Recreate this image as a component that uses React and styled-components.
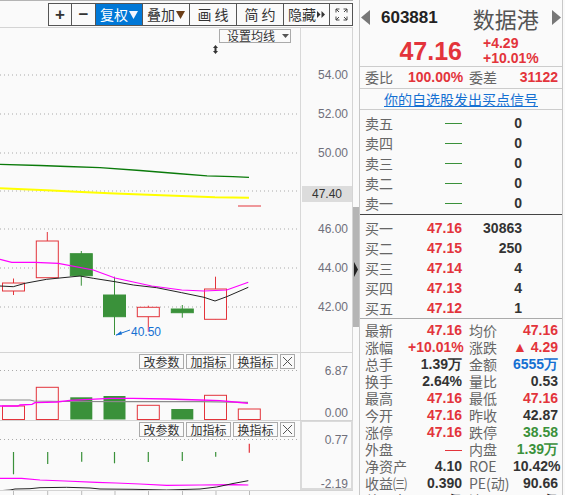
import React from 'react';
import styled, { createGlobalStyle } from 'styled-components';

const RED = '#e3343b';
const GREEN = '#3a913a';
const BLUE = '#1570d2';
const NUM = '"Liberation Sans", Arial, sans-serif';
const CJK = '"Noto Sans CJK SC", "Liberation Sans", sans-serif';

const GlobalStyle = createGlobalStyle`
  html, body { margin: 0; padding: 0; background: #fafafa; }
  body { font-family: ${CJK}; overflow: hidden; }
`;

// ---------- data ----------
const tools = [
  { w: 22, label: '+', sym: true },
  { w: 24, label: '−', sym: true },
  { w: 47, label: '复权', arrow: 'white', active: true },
  { w: 47, label: '叠加', arrow: 'brown' },
  { w: 47, label: '画 线' },
  { w: 47, label: '简 约' },
  { w: 46, label: '隐藏', more: true },
  { w: 23, full: true },
];

const candles = [
  { x: 13.5, t: 283, b: 291, h: 278.5, l: 295, up: true },
  { x: 47.3, t: 241, b: 277.7, h: 232, l: 277.7, up: true },
  { x: 81.3, t: 253.7, b: 275.7, h: 251, l: 285.7 },
  { x: 114.5, t: 295, b: 316.7, h: 276.7, l: 335 },
  { x: 148.3, t: 307.3, b: 316.7, h: 305.7, l: 331.7, up: true },
  { x: 182.3, t: 309, b: 312.7, h: 305, l: 317.7 },
  { x: 215.5, t: 289, b: 319.3, h: 276.7, l: 289, up: true },
];

const vols = [
  { x: 13.5, t: 406, up: true },
  { x: 47.3, t: 387.3, up: true },
  { x: 81.3, t: 397.3 },
  { x: 114.5, t: 396 },
  { x: 148.3, t: 405.3, up: true },
  { x: 182.3, t: 409 },
  { x: 215.5, t: 395.3, up: true },
  { x: 249.3, t: 409, up: true },
];

const macd = [
  { x: 13.5, y: 474.3 },
  { x: 47.7, y: 464 },
  { x: 81.7, y: 461.7 },
  { x: 114.5, y: 463.3 },
  { x: 148.3, y: 462 },
  { x: 182.3, y: 461 },
  { x: 215.7, y: 456.7 },
  { x: 249.3, y: 443.7, up: true },
];

const sells = ['卖五', '卖四', '卖三', '卖二', '卖一'];
const buys = [
  ['买一', '47.16', '30863'],
  ['买二', '47.15', '250'],
  ['买三', '47.14', '4'],
  ['买四', '47.13', '4'],
  ['买五', '47.12', '1'],
];

const stats = [
  ['最新', '47.16', RED, '均价', '47.16', RED],
  ['涨幅', '+10.01%', RED, '涨跌', '▲ 4.29', RED],
  ['总手', '1.39万', '#333', '金额', '6555万', BLUE],
  ['换手', '2.64%', '#333', '量比', '0.53', '#333'],
  ['最高', '47.16', RED, '最低', '47.16', RED],
  ['今开', '47.16', RED, '昨收', '42.87', '#333'],
  ['涨停', '47.16', RED, '跌停', '38.58', GREEN],
  ['外盘', null, RED, '内盘', '1.39万', GREEN],
  ['净资产', '4.10', '#333', 'ROE', '10.42%', '#333'],
  ['收益㈢', '0.390', '#333', 'PE(动)', '90.66', '#333'],
  ['总股本', '0.53亿', '#333', '流通股', '0.53亿', '#333'],
];

// ---------- layout ----------
const Page = styled.div`
  display: flex;
  width: 565px;
  height: 495px;
  overflow: hidden;
  background: #fafafa;
`;

const Left = styled.div`
  width: 353px;
  flex-shrink: 0;
  display: flex;
  flex-direction: column;
  border-top: 1px solid #b4b4b4;
  & > * { flex-shrink: 0; }
`;

const Toolbar = styled.div`
  height: 27px;
  box-sizing: border-box;
  border-bottom: 1px solid #d4d4d4;
  display: flex;
  justify-content: flex-end;
  align-items: flex-start;
  padding-top: 2px;
`;

const ToolGroup = styled.div`
  display: flex;
  height: 23px;
  box-sizing: border-box;
  border: 1px solid #555;
`;

const ToolButton = styled.div`
  width: ${p => p.$w}px;
  flex-shrink: 0;
  box-sizing: border-box;
  border-left: 1px solid #555;
  &:first-child { border-left: none; }
  display: flex;
  align-items: center;
  justify-content: center;
  gap: 1px;
  background: ${p => (p.$active ? '#0078d7' : 'transparent')};
  color: ${p => (p.$active ? '#fff' : '#333')};
  font-family: ${p => (p.$sym ? NUM : CJK)};
  font-weight: ${p => (p.$sym ? 700 : 400)};
  font-size: ${p => (p.$sym ? 17 : 14)}px;
  line-height: 21px;
  white-space: pre;
  svg { display: block; flex-shrink: 0; }
`;

const Panel = styled.div`
  display: flex;
  height: ${p => p.$h}px;
  border-top: ${p => (p.$top ? '1px solid #d4d4d4' : 'none')};
`;

const Plot = styled.div`
  position: relative;
  width: 300px;
  flex-shrink: 0;
  svg { display: block; }
`;

const Axis = styled.div`
  position: relative;
  width: ${p => (p.$boxed ? 49 : 51)}px;
  border: ${p => (p.$boxed ? '2px solid #dadada' : 'none')};
  border-left: ${p => (p.$boxed ? '2px solid #dadada' : '1px solid #d8d8d8')};
  border-right: ${p => (p.$boxed ? '2px solid #dadada' : '1px solid #d4d4d4')};
  border-top-width: ${p => (p.$boxed ? 1 : 0)}px;
`;

const AxisLabel = styled.div`
  position: absolute;
  right: ${p => (p.$boxed ? 3 : 4)}px;
  font-family: ${NUM};
  font-size: 12px;
  line-height: 14px;
  color: #6f6f7a;
`;

const AxisMark = styled.div`
  position: absolute;
  left: 1px;
  right: 0;
  height: 16px;
  background: #dcdcdc;
  color: #333;
  font-family: ${NUM};
  font-size: 12px;
  line-height: 16px;
  text-align: center;
`;

const MaButton = styled.div`
  position: absolute;
  left: 219px;
  top: 1px;
  width: 72px;
  height: 14px;
  box-sizing: border-box;
  border: 1px solid #aaa;
  display: flex;
  align-items: center;
  padding-left: 7px;
  gap: 7px;
  font-size: 12px;
  line-height: 12px;
  color: #333;
`;

const DragMark = styled.div`
  position: absolute;
  left: 213px;
  top: 17px;
  svg { display: block; }
`;

const PanelButtons = styled.div`
  position: absolute;
  top: 1px;
  right: 5px;
  display: flex;
  gap: 2px;
`;

const PanelButton = styled.div`
  width: ${p => p.$w}px;
  height: 15px;
  box-sizing: border-box;
  border: 1px solid #aaa;
  font-size: 12px;
  line-height: 13px;
  text-align: center;
  color: #333;
  svg { display: block; }
`;

const TimeAxis = styled.div`
  flex: 1;
  border-top: 1px solid #d4d4d4;
  svg { display: block; }
`;

const Scroll = styled.div`
  position: relative;
  width: 6px;
  flex-shrink: 0;
`;

const Thumb = styled.div`
  position: absolute;
  left: 0;
  right: 0;
  top: 207px;
  height: 120px;
  background: #b5b5b5;
`;

const ScrollMarker = styled.div`
  position: absolute;
  left: 1px;
  top: 262px;
  svg { display: block; }
`;

const Right = styled.div`
  width: 202px;
  flex-shrink: 0;
  border-left: 1px solid #c8c8c8;
  border-right: 1px solid #c8c8c8;
  display: flex;
  flex-direction: column;
  & > * { flex-shrink: 0; }
`;

const Header = styled.div`
  height: 34px;
  display: flex;
  align-items: center;
  padding: 1px 1px 0;
  box-sizing: border-box;
  svg { display: block; }
`;

const Code = styled.div`
  margin-left: 11px;
  font-family: ${NUM};
  font-weight: 700;
  font-size: 17px;
  line-height: 20px;
  color: #222;
`;

const Name = styled.div`
  margin-left: 35px;
  font-size: 22px;
  line-height: 26px;
  color: #555;
`;

const Spacer = styled.div`
  flex: 1;
`;

const PriceBlock = styled.div`
  height: 32px;
  display: flex;
  align-items: center;
  border-bottom: 1px solid #ccc;
`;

const BigPrice = styled.div`
  width: 102px;
  text-align: right;
  font-family: ${NUM};
  font-weight: 700;
  font-size: 25px;
  line-height: 26px;
  color: ${RED};
  padding-top: 2px;
`;

const Changes = styled.div`
  margin-left: 21px;
  font-family: ${NUM};
  font-weight: 700;
  font-size: 14px;
  line-height: 15px;
  color: ${RED};
  padding-top: 1px;
`;

const Grid = styled.div`
  display: grid;
  grid-template-columns: ${p => p.$cols};
  grid-auto-rows: ${p => p.$row}px;
  align-items: center;
  padding-left: 5px;
  padding-top: ${p => p.$pt || 0}px;
  padding-bottom: ${p => p.$pb || 0}px;
  border-bottom: ${p => p.$line || 'none'};
`;

const Label = styled.div`
  font-size: 14px;
  line-height: 17px;
  color: #666;
  white-space: nowrap;
  padding-left: ${p => (p.$indent ? 7 : 0)}px;
`;

const Value = styled.div`
  font-family: ${NUM};
  font-weight: 700;
  font-size: 14px;
  line-height: 17px;
  text-align: right;
  white-space: nowrap;
  color: ${p => p.$color || '#333'};
`;

const Dash = styled.span`
  display: inline-block;
  vertical-align: middle;
  width: 17px;
  height: 1px;
  background: ${p => p.$color};
`;

const LinkRow = styled.div`
  height: 20px;
  border-bottom: 1px solid #ccc;
  display: flex;
  align-items: center;
  justify-content: center;
`;

const SignalLink = styled.a`
  font-size: 14px;
  line-height: 17px;
  color: ${BLUE};
  text-decoration: underline;
`;

// ---------- drawings ----------
const Tri = ({ color }) => (
  <svg width="9" height="9" viewBox="0 0 9 9">
    <polygon points="0,1 9,1 4.5,9" fill={color} />
  </svg>
);

const Arrows = () => (
  <svg width="8" height="7" viewBox="0 0 8 7">
    <polygon points="0,0 3.5,3.5 0,7" fill="#333" />
    <polygon points="4.5,0 8,3.5 4.5,7" fill="#333" />
  </svg>
);

const FullIcon = () => (
  <svg width="13" height="13" viewBox="0 0 13 13" fill="none" stroke="#444" strokeWidth="1">
    <path d="M1 4.5V1h3.5M1 1l3 3" />
    <path d="M12 4.5V1H8.5M12 1L9 4" />
    <path d="M1 8.5V12h3.5M1 12l3-3" />
    <path d="M12 8.5V12H8.5M12 12L9 9" />
  </svg>
);

const SideArrow = ({ right }) => (
  <svg width="9" height="15" viewBox="0 0 9 15">
    <polygon points={right ? '0,0 9,7.5 0,15' : '9,0 0,7.5 9,15'} fill="#777" />
  </svg>
);

const GridLines = ({ ys }) =>
  ys.map(y => (
    <line key={y} x1="0" x2="300" y1={y} y2={y} stroke="#aaa" strokeDasharray="1 3" />
  ));

const MainChart = () => (
  <svg width="300" height="324" viewBox="0 28 300 324">
    <GridLines ys={[75, 114, 153, 191, 229, 268, 307]} />
    <polyline
      points="0,164.3 40,165.5 67,166.5 100,167.7 140,170.5 177,173.5 207,175.8 233,176.7 249,177.3"
      fill="none" stroke="#0a7a0a" strokeWidth="1.3"
    />
    <polyline
      points="0,188.3 46.7,190.3 81.7,192 115,193.6 148.3,194.8 181.7,196 215,197.3 249,197.7"
      fill="none" stroke="#ffff00" strokeWidth="2"
    />
    <line x1="238" x2="261" y1="206" y2="206" stroke={RED} strokeWidth="1" />
    {candles.map((c, i) => (
      <g key={i}>
        {c.up ? (
          <>
            <line x1={c.x} x2={c.x} y1={c.h} y2={c.t} stroke={RED} />
            <line x1={c.x} x2={c.x} y1={c.b} y2={c.l} stroke={RED} />
            <rect x={c.x - 11} y={c.t} width="22" height={c.b - c.t} fill="#fafafa" stroke={RED} />
          </>
        ) : (
          <>
            <line x1={c.x} x2={c.x} y1={c.h} y2={c.l} stroke={GREEN} />
            <rect x={c.x - 11} y={c.t} width="22" height={c.b - c.t} fill={GREEN} stroke={GREEN} />
          </>
        )}
      </g>
    ))}
    <polyline
      points="0,259.3 11.7,262.3 35,262.3 58.3,263.3 93.3,270 115,278 151.7,286 181.7,290 204,291 226.7,290 248.3,282.3"
      fill="none" stroke="#ff00ff" strokeWidth="1.2"
    />
    <polyline
      points="0,286 13.3,286.7 25,283.3 46.7,279.3 80,276 93.3,278.3 115,281.7 133.3,285 156.7,287.7 181.7,292.7 204,297.3 215,301 226.7,296.7 248.3,287.3"
      fill="none" stroke="#222" strokeWidth="1"
    />
    <line x1="116" y1="335" x2="130" y2="330" stroke={BLUE} />
    <polygon points="115.5,335.5 121,331 122,334.5" fill={BLUE} />
    <text x="131" y="335.5" fontFamily={NUM} fontSize="12" fill={BLUE}>40.50</text>
  </svg>
);

const VolChart = () => (
  <svg width="300" height="67" viewBox="0 353 300 67">
    <GridLines ys={[370.5]} />
    {vols.map((v, i) =>
      v.up ? (
        <rect key={i} x={v.x - 11} y={v.t} width="22" height={419.5 - v.t} fill="none" stroke={RED} />
      ) : (
        <rect key={i} x={v.x - 11} y={v.t} width="22" height={419.5 - v.t} fill={GREEN} />
      )
    )}
    <polyline
      points="0,400 30,400 34,401 66,401.5 130,401.7 200,401.7 248,402.3"
      fill="none" stroke="#8a8a8a" strokeWidth="1.2"
    />
    <polyline
      points="0,406 18,406 20,405 32,404.3 35,402.7 57,402 70,400.3 90,399.3 110,398.3 133,398.3 167,399 200,400 220,400.7 240,402.5 248,403.3"
      fill="none" stroke="#ff00ff" strokeWidth="1.3"
    />
  </svg>
);

const MacdChart = () => (
  <svg width="300" height="69" viewBox="0 421 300 69">
    <GridLines ys={[439.5]} />
    {macd.map((m, i) => (
      <line
        key={i}
        x1={m.x} x2={m.x}
        y1={m.up ? m.y : 452}
        y2={m.up ? 452.7 : m.y}
        stroke={m.up ? RED : GREEN}
        strokeWidth="1.2"
      />
    ))}
    <polyline
      points="0,478.3 21.7,478.3 40,480 65,481 96.7,482.3 116,483 140,484 166.7,485.3 200,485 233.3,484.7 248.3,485"
      fill="none" stroke="#ff00ff" strokeWidth="1.2"
    />
    <polyline
      points="0,490.7 10,490 15,489 30,488.7 40,487.7 66.7,487.3 90,488 100,489 133,489.3 166.7,490 200,489 216.7,487 233,483.5 248.3,480.7"
      fill="none" stroke="#222" strokeWidth="1"
    />
  </svg>
);

const PanelTools = () => (
  <PanelButtons>
    <PanelButton $w={45}>改参数</PanelButton>
    <PanelButton $w={45}>加指标</PanelButton>
    <PanelButton $w={45}>换指标</PanelButton>
    <PanelButton $w={15}>
      <svg width="13" height="13" viewBox="0 0 13 13">
        <path d="M2 2l9 9M11 2l-9 9" stroke="#555" strokeWidth="1" />
      </svg>
    </PanelButton>
  </PanelButtons>
);

const AxisLabels = ({ items, top0, boxed }) =>
  items.map(([text, y]) => (
    <AxisLabel key={text} $boxed={boxed} style={{ top: y - top0 - 7 }}>
      {text}
    </AxisLabel>
  ));

export default function App() {
  return (
    <>
      <GlobalStyle />
      <Page>
        <Left>
          <Toolbar>
            <ToolGroup>
              {tools.map((t, i) => (
                <ToolButton key={i} $w={t.w} $active={t.active} $sym={t.sym}>
                  {t.label}
                  {t.arrow && <Tri color={t.arrow === 'white' ? '#f2f6ff' : '#6b3d16'} />}
                  {t.more && <Arrows />}
                  {t.full && <FullIcon />}
                </ToolButton>
              ))}
            </ToolGroup>
          </Toolbar>

          <Panel $h={324}>
            <Plot>
              <MainChart />
              <MaButton>
                设置均线
                <svg width="7" height="4" viewBox="0 0 7 4"><polygon points="0,0 7,0 3.5,4" fill="#555" /></svg>
              </MaButton>
              <DragMark>
                <svg width="5" height="9" viewBox="0 0 5 9">
                  <polygon points="2.5,0 5,3 0,3" fill="#333" />
                  <rect x="1.5" y="3" width="2" height="3" fill="#333" />
                  <polygon points="0,6 5,6 2.5,9" fill="#333" />
                </svg>
              </DragMark>
            </Plot>
            <Axis>
              <AxisLabels
                top0={28}
                items={[['54.00', 75], ['52.00', 114], ['50.00', 153], ['46.00', 229], ['44.00', 268], ['42.00', 307]]}
              />
              <AxisMark style={{ top: 158 }}>47.40</AxisMark>
            </Axis>
          </Panel>

          <Panel $h={67} $top>
            <Plot>
              <VolChart />
              <PanelTools />
            </Plot>
            <Axis>
              <AxisLabels top0={353} items={[['6.87', 370.5], ['0.00', 413]]} />
            </Axis>
          </Panel>

          <Panel $h={69} $top>
            <Plot>
              <MacdChart />
              <PanelTools />
            </Plot>
            <Axis $boxed>
              <AxisLabels boxed top0={422} items={[['0.77', 439.5], ['-2.19', 484]]} />
            </Axis>
          </Panel>

          <TimeAxis>
            <svg width="300" height="5">
              {[13.5, 47.7, 81.7, 115, 148.5, 182.5, 216, 249.5].map(x => (
                <line key={x} x1={x} x2={x} y1="0" y2="5" stroke="#bbb" />
              ))}
            </svg>
          </TimeAxis>
        </Left>

        <Scroll>
          <Thumb />
          <ScrollMarker>
            <svg width="4" height="15" viewBox="0 0 4 15">
              <polygon points="0,0 4,7.5 0,15" fill="#222" />
            </svg>
          </ScrollMarker>
        </Scroll>

        <Right>
          <Header>
            <SideArrow />
            <Code>603881</Code>
            <Name>数据港</Name>
            <Spacer />
            <SideArrow right />
          </Header>

          <PriceBlock>
            <BigPrice>47.16</BigPrice>
            <Changes>
              <div>+4.29</div>
              <div>+10.01%</div>
            </Changes>
          </PriceBlock>

          <Grid $cols="43px 54px 51px 45px" $row={21} $line="1px solid #ccc">
            <Label>委比</Label>
            <Value $color={RED}>100.00%</Value>
            <Label $indent>委差</Label>
            <Value $color={RED}>31122</Value>
          </Grid>

          <LinkRow>
            <SignalLink href="#">你的自选股发出买点信号</SignalLink>
          </LinkRow>

          <Grid $cols="43px 54px 60px" $row={20} $pt={3} $pb={1} $line="1px solid #444">
            {sells.map(s => (
              <React.Fragment key={s}>
                <Label>{s}</Label>
                <Value><Dash $color={GREEN} /></Value>
                <Value>0</Value>
              </React.Fragment>
            ))}
          </Grid>

          <Grid $cols="43px 54px 60px" $row={20} $pt={3} $line="1px solid #aaa">
            {buys.map(([l, p, v]) => (
              <React.Fragment key={l}>
                <Label>{l}</Label>
                <Value $color={RED}>{p}</Value>
                <Value>{v}</Value>
              </React.Fragment>
            ))}
          </Grid>

          <Grid $cols="43px 54px 51px 45px" $row={17} $pt={3}>
            {stats.map(([l1, v1, c1, l2, v2, c2]) => (
              <React.Fragment key={l1}>
                <Label>{l1}</Label>
                <Value $color={c1}>{v1 === null ? <Dash $color={RED} /> : v1}</Value>
                <Label $indent>{l2}</Label>
                <Value $color={c2}>{v2}</Value>
              </React.Fragment>
            ))}
          </Grid>
        </Right>
      </Page>
    </>
  );
}
